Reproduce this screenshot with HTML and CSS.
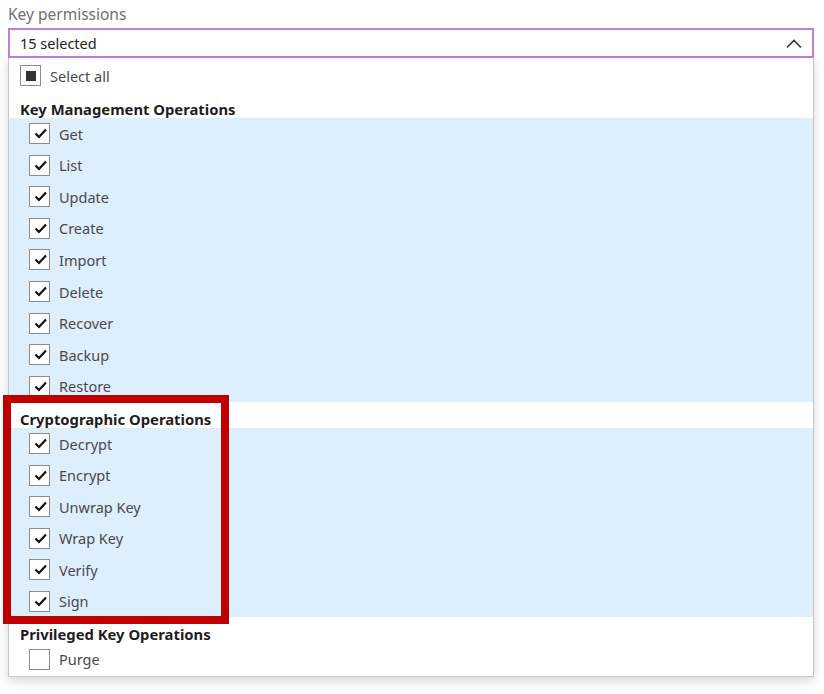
FILE: index.html
```html
<!DOCTYPE html>
<html>
<head>
<meta charset="utf-8">
<link rel="stylesheet" href="styles.css">
</head>
<body>
<div class="field">
  <div class="label">Key permissions</div>
  <div class="select">
    <span>15 selected</span>
    <svg class="chev" width="16" height="10" viewBox="0 0 16 10"><polyline points="1,8.5 8,1.5 15,8.5" fill="none" stroke="#333" stroke-width="1.6"/></svg>
  </div>
  <div class="popup">
    <div class="row all">
      <span class="box"><span class="ind"></span></span>
      <span class="txt">Select all</span>
    </div>
    <div class="head">Key Management Operations</div>
    <div class="group">
      <div class="row"><span class="box"><svg width="21" height="21" viewBox="0 0 21 21"><polyline points="6.5,10.5 10,14 17,6.5" fill="none" stroke="#111" stroke-width="2.2"/></svg></span><span class="txt">Get</span></div>
      <div class="row"><span class="box"><svg width="21" height="21" viewBox="0 0 21 21"><polyline points="6.5,10.5 10,14 17,6.5" fill="none" stroke="#111" stroke-width="2.2"/></svg></span><span class="txt">List</span></div>
      <div class="row"><span class="box"><svg width="21" height="21" viewBox="0 0 21 21"><polyline points="6.5,10.5 10,14 17,6.5" fill="none" stroke="#111" stroke-width="2.2"/></svg></span><span class="txt">Update</span></div>
      <div class="row"><span class="box"><svg width="21" height="21" viewBox="0 0 21 21"><polyline points="6.5,10.5 10,14 17,6.5" fill="none" stroke="#111" stroke-width="2.2"/></svg></span><span class="txt">Create</span></div>
      <div class="row"><span class="box"><svg width="21" height="21" viewBox="0 0 21 21"><polyline points="6.5,10.5 10,14 17,6.5" fill="none" stroke="#111" stroke-width="2.2"/></svg></span><span class="txt">Import</span></div>
      <div class="row"><span class="box"><svg width="21" height="21" viewBox="0 0 21 21"><polyline points="6.5,10.5 10,14 17,6.5" fill="none" stroke="#111" stroke-width="2.2"/></svg></span><span class="txt">Delete</span></div>
      <div class="row"><span class="box"><svg width="21" height="21" viewBox="0 0 21 21"><polyline points="6.5,10.5 10,14 17,6.5" fill="none" stroke="#111" stroke-width="2.2"/></svg></span><span class="txt">Recover</span></div>
      <div class="row"><span class="box"><svg width="21" height="21" viewBox="0 0 21 21"><polyline points="6.5,10.5 10,14 17,6.5" fill="none" stroke="#111" stroke-width="2.2"/></svg></span><span class="txt">Backup</span></div>
      <div class="row"><span class="box"><svg width="21" height="21" viewBox="0 0 21 21"><polyline points="6.5,10.5 10,14 17,6.5" fill="none" stroke="#111" stroke-width="2.2"/></svg></span><span class="txt">Restore</span></div>
    </div>
    <div class="head">Cryptographic Operations</div>
    <div class="group">
      <div class="row"><span class="box"><svg width="21" height="21" viewBox="0 0 21 21"><polyline points="6.5,10.5 10,14 17,6.5" fill="none" stroke="#111" stroke-width="2.2"/></svg></span><span class="txt">Decrypt</span></div>
      <div class="row"><span class="box"><svg width="21" height="21" viewBox="0 0 21 21"><polyline points="6.5,10.5 10,14 17,6.5" fill="none" stroke="#111" stroke-width="2.2"/></svg></span><span class="txt">Encrypt</span></div>
      <div class="row"><span class="box"><svg width="21" height="21" viewBox="0 0 21 21"><polyline points="6.5,10.5 10,14 17,6.5" fill="none" stroke="#111" stroke-width="2.2"/></svg></span><span class="txt">Unwrap Key</span></div>
      <div class="row"><span class="box"><svg width="21" height="21" viewBox="0 0 21 21"><polyline points="6.5,10.5 10,14 17,6.5" fill="none" stroke="#111" stroke-width="2.2"/></svg></span><span class="txt">Wrap Key</span></div>
      <div class="row"><span class="box"><svg width="21" height="21" viewBox="0 0 21 21"><polyline points="6.5,10.5 10,14 17,6.5" fill="none" stroke="#111" stroke-width="2.2"/></svg></span><span class="txt">Verify</span></div>
      <div class="row"><span class="box"><svg width="21" height="21" viewBox="0 0 21 21"><polyline points="6.5,10.5 10,14 17,6.5" fill="none" stroke="#111" stroke-width="2.2"/></svg></span><span class="txt">Sign</span></div>
    </div>
    <div class="head">Privileged Key Operations</div>
    <div class="row plain"><span class="box"></span><span class="txt">Purge</span></div>
  </div>
  <div class="highlight"></div>
</div>
</body>
</html>
```
FILE: styles.css
```css
html, body {
  margin: 0;
  padding: 0;
  background: #fff;
}
body {
  font-family: "Noto Sans", "Open Sans", sans-serif;
  font-size: 14px;
  color: #333;
}
.field {
  position: relative;
  width: 824px;
  height: 694px;
}
.label {
  padding: 4px 0 0 8px;
  height: 24px;
  line-height: 20px;
  color: #707070;
  font-size: 15.5px;
}
.select {
  margin-left: 8px;
  width: 806px;
  height: 30px;
  box-sizing: border-box;
  border: 2px solid #bf80d8;
  display: flex;
  align-items: center;
  justify-content: space-between;
  padding: 0 10px 0 10px;
  color: #222;
  font-size: 14.5px;
}
.chev {
  margin-top: 1px;
}
.popup {
  margin-left: 8px;
  width: 806px;
  height: 619px;
  box-sizing: border-box;
  border: 1px solid #c6c6c6;
  border-top: none;
  box-shadow: 0 4px 10px rgba(0, 0, 0, 0.16);
  display: flex;
  flex-direction: column;
}
.row {
  height: 31.56px;
  display: flex;
  align-items: center;
  padding-left: 20px;
}
.row.all {
  height: 34px;
  padding-left: 11px;
  padding-top: 1px;
  box-sizing: border-box;
}
.row.plain {
  height: 32px;
}
.box {
  width: 21px;
  height: 21px;
  box-sizing: border-box;
  border: 1px solid #8d8d8d;
  background: #fff;
  display: flex;
  align-items: center;
  justify-content: center;
  flex: none;
}
.box svg {
  margin: -1px;
}
.ind {
  width: 10px;
  height: 10px;
  background: #333;
}
.txt {
  margin-left: 9px;
  color: #4a4a4a;
  font-size: 14.5px;
}
.head {
  height: 26px;
  box-sizing: border-box;
  padding: 6px 0 0 11px;
  line-height: 22px;
  font-weight: bold;
  color: #1e1e1e;
  font-size: 14.8px;
  white-space: nowrap;
}
.group {
  background: #ddeefd;
}
.highlight {
  position: absolute;
  left: 3px;
  top: 395px;
  width: 226px;
  height: 229px;
  box-sizing: border-box;
  border: 8px solid #c00000;
}
```
